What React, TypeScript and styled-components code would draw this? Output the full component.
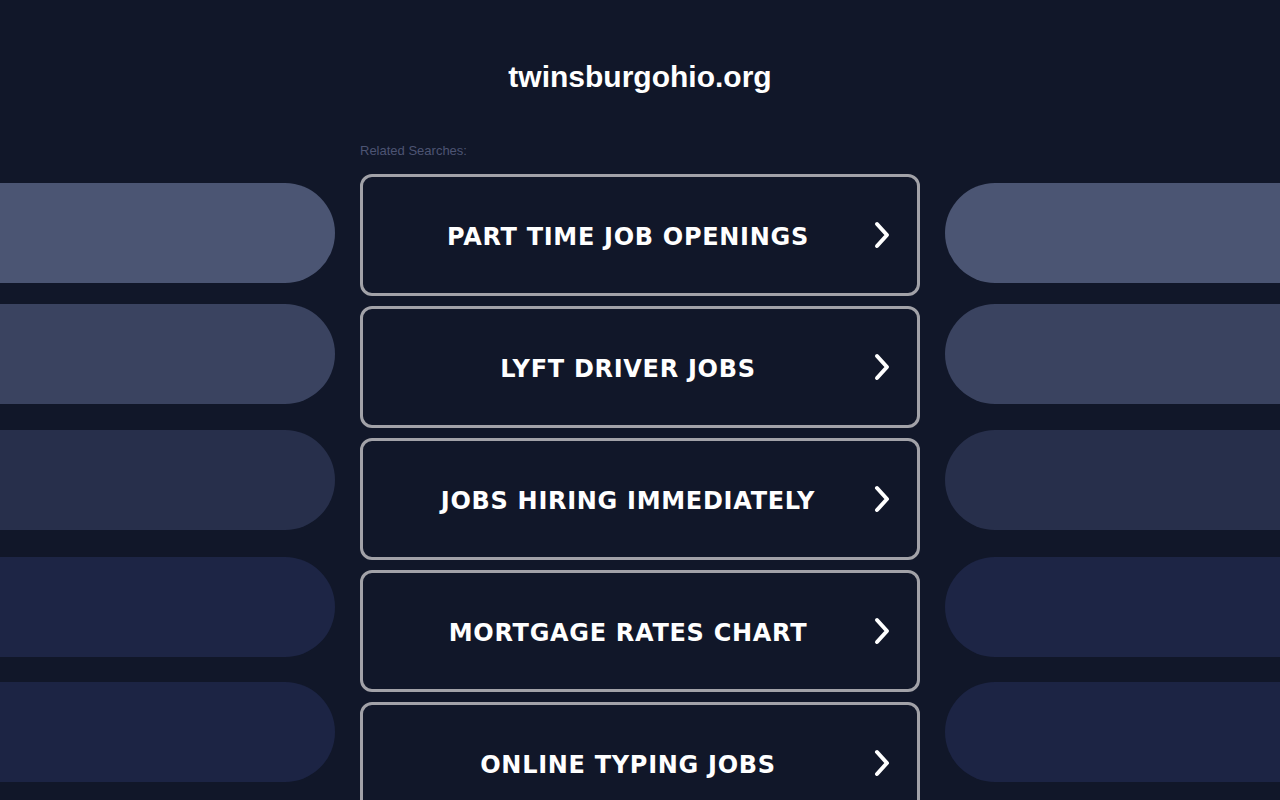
import React from "react";
import styled, { createGlobalStyle } from "styled-components";

const Global = createGlobalStyle`
  html, body { margin: 0; padding: 0; background: #111729; }
  body { font-family: "Liberation Sans", Arial, sans-serif; overflow: hidden; }
  * { box-sizing: border-box; }
`;

const Page = styled.div`
  width: 1280px;
  height: 800px;
  overflow: hidden;
  background: #111729;
`;

const Title = styled.h1`
  margin: 0;
  padding-top: 59px;
  height: 143px;
  text-align: center;
  font-family: "Liberation Sans", Arial, sans-serif;
  font-weight: 700;
  font-size: 30px;
  line-height: 36px;
  color: #ffffff;
`;

const Grid = styled.div`
  display: grid;
  grid-template-columns: 335px 560px 335px;
  column-gap: 25px;
`;

const Side = styled.div`
  display: flex;
  flex-direction: column;
  align-items: stretch;
`;

const Pill = styled.div<{ $color: string; $top: number; $right?: boolean }>`
  height: 100px;
  margin-top: ${(p) => p.$top}px;
  background: ${(p) => p.$color};
  border-radius: ${(p) => (p.$right ? "50px 0 0 50px" : "0 50px 50px 0")};
`;

const Center = styled.div`
  display: flex;
  flex-direction: column;
`;

const Label = styled.div`
  font-family: "Liberation Sans", Arial, sans-serif;
  font-size: 13px;
  line-height: 15px;
  color: #4d5473;
  margin-bottom: 16px;
`;

const List = styled.div`
  display: flex;
  flex-direction: column;
  gap: 10px;
`;

const Button = styled.a`
  position: relative;
  display: flex;
  align-items: center;
  justify-content: center;
  height: 122px;
  border: 3px solid #a2a2a8;
  border-radius: 12px;
  padding-right: 24px;
  padding-top: 4px;
  color: #ffffff;
  text-decoration: none;
  font-family: "DejaVu Sans", Verdana, sans-serif;
  font-weight: 700;
  font-size: 24px;
  letter-spacing: 0.7px;
  cursor: pointer;
`;

const Chevron = styled.svg`
  position: absolute;
  right: 25px;
  top: 50%;
  margin-top: -15px;
  width: 20px;
  height: 30px;
`;

const pills = [
  { color: "#4b5573", top: 40 },
  { color: "#3a4360", top: 21 },
  { color: "#272f4b", top: 26 },
  { color: "#1d2545", top: 27 },
  { color: "#1c2444", top: 25 },
];

const items = [
  "PART TIME JOB OPENINGS",
  "LYFT DRIVER JOBS",
  "JOBS HIRING IMMEDIATELY",
  "MORTGAGE RATES CHART",
  "ONLINE TYPING JOBS",
];

export default function App() {
  return (
    <Page>
      <Global />
      <Title>twinsburgohio.org</Title>
      <Grid>
        <Side>
          {pills.map((p, i) => (
            <Pill key={i} $color={p.color} $top={p.top} />
          ))}
        </Side>
        <Center>
          <Label>Related Searches:</Label>
          <List>
            {items.map((t) => (
              <Button key={t}>
                {t}
                <Chevron viewBox="0 0 20 30">
                  <polyline
                    points="5,4 15,15 5,26"
                    fill="none"
                    stroke="#ffffff"
                    strokeWidth="4"
                    strokeLinecap="round"
                    strokeLinejoin="round"
                  />
                </Chevron>
              </Button>
            ))}
          </List>
        </Center>
        <Side>
          {pills.map((p, i) => (
            <Pill key={i} $color={p.color} $top={p.top} $right />
          ))}
        </Side>
      </Grid>
    </Page>
  );
}
